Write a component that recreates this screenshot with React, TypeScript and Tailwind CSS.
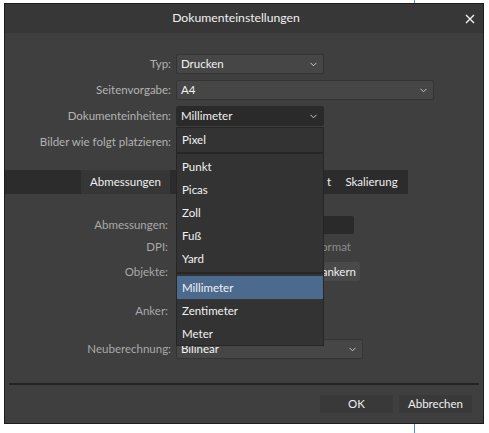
import React from "react";

const Chevron = () => (
  <svg width="7" height="5" viewBox="0 0 7 5" className="shrink-0">
    <path d="M0.5 0.8 L3.5 3.8 L6.5 0.8" fill="none" stroke="#c8c8c8" strokeWidth="1" />
  </svg>
);

function Select({ value, w, dark }: { value: string; w: string; dark?: boolean }) {
  return (
    <div
      className={`${w} h-[20px] flex items-center justify-between pl-[4px] pr-[6px] rounded-[2px] border ${
        dark ? "bg-[#2a2a2a] border-[#2a2a2a]" : "bg-[#464646] border-[#343434]"
      } text-[#f2f2f2]`}
    >
      <span className="leading-none">{value}</span>
      <Chevron />
    </div>
  );
}

function Row({ label, children, mt }: { label: string; children?: React.ReactNode; mt?: string }) {
  return (
    <div className={`flex items-center h-[20px] ${mt ?? ""}`}>
      <div className="w-[166px] text-right text-[#b3b3b3] leading-none">{label}</div>
      <div className="ml-[5px] flex items-center">{children}</div>
    </div>
  );
}

function Item({ t, active }: { t: string; active?: boolean }) {
  return (
    <div
      className={`h-[23px] flex items-center pl-[5px] text-[#f2f2f2] ${active ? "bg-[#4b6a8d]" : ""}`}
    >
      {t}
    </div>
  );
}

export default function App() {
  return (
    <div className="relative w-[489px] h-[433px] bg-white overflow-hidden font-['Lato',sans-serif] text-[11.5px]">
      <div className="absolute left-[414px] top-0 w-px h-full bg-[#4a90d9]" />
      <div className="relative ml-[4px] mt-[3px] w-[480px] h-[421px] border border-[#1d1d1d] bg-[#3f3f3f] flex flex-col">
        {/* Title bar */}
        <div className="h-[29px] bg-[#373737] flex items-center justify-center relative shrink-0">
          <span className="text-[12.2px] text-[#f0f0f0] pr-[16px]">Dokumenteinstellungen</span>
          <svg className="absolute right-[8px] top-[10px]" width="10" height="10" viewBox="0 0 10 10">
            <path d="M1 1 L9 9 M9 1 L1 9" stroke="#f0f0f0" strokeWidth="1.4" />
          </svg>
        </div>

        {/* Top form */}
        <div className="flex flex-col gap-[6px] pt-[21px]">
          <Row label="Typ:">
            <Select value="Drucken" w="w-[148px]" />
          </Row>
          <Row label="Seitenvorgabe:">
            <Select value="A4" w="w-[258px]" />
          </Row>
          <Row label="Dokumenteinheiten:">
            <Select value="Millimeter" w="w-[148px]" dark />
          </Row>
          <Row label="Bilder wie folgt platzieren:">
            <Select value="" w="w-[148px]" />
          </Row>
        </div>

        {/* Tabs */}
        <div className="mt-[18px] h-[24px] w-[403px] bg-[#2c2c2c] flex pl-[76px] text-[#f0f0f0]">
          <div className="w-[89px] bg-[#363636] flex items-center justify-center">Abmessungen</div>
          <div className="w-[50px]" />
          <div className="w-[50px]" />
          <div className="w-[66px] flex items-center justify-end pr-[5px]">t</div>
          <div className="w-[71px] flex items-center justify-center">Skalierung</div>
        </div>

        {/* Tab page */}
        <div className="flex flex-col pt-[22px]">
          <div className="flex items-center h-[18px]">
            <div className="w-[163px] text-right text-[#a9a9a9]">Abmessungen:</div>
            <div className="ml-[8px] w-[178px] h-[18px] bg-[#2a2a2a] rounded-[2px]" />
          </div>
          <div className="flex items-center h-[18px] mt-[4px]">
            <div className="w-[163px] text-right text-[#a9a9a9]">DPI:</div>
            <div className="ml-[8px] w-[175px] flex items-center justify-end">
              <span className="text-[#8c8c8c]">ormat</span>
            </div>
          </div>
          <div className="flex items-center h-[19px] mt-[6px]">
            <div className="w-[163px] text-right text-[#a9a9a9]">Objekte:</div>
            <div className="ml-[8px] w-[184px] flex justify-end">
              <div className="h-[19px] w-[60px] pr-[4px] bg-[#494949] rounded-[2px] flex items-center justify-end text-[#f0f0f0]">
                ankern
              </div>
            </div>
          </div>
          <div className="flex items-center h-[48px] mt-[6px]">
            <div className="w-[163px] text-right text-[#a9a9a9]">Anker:</div>
          </div>
          <div className="flex items-center h-[20px] mt-[4px]">
            <div className="w-[166px] text-right text-[#a9a9a9]">Neuberechnung:</div>
            <div className="ml-[5px]">
              <Select value="Bilinear" w="w-[187px]" />
            </div>
          </div>
        </div>

        {/* Footer */}
        <div className="mt-auto">
          <div className="mx-[4px] h-[2px] bg-[#252525]" />
          <div className="flex justify-end gap-[6px] pr-[11px] pt-[10px] pb-[10px]">
            <div className="w-[73px] h-[18px] bg-[#393939] flex items-center justify-center text-[#f0f0f0]">OK</div>
            <div className="w-[73px] h-[18px] bg-[#393939] flex items-center justify-center text-[#f0f0f0]">Abbrechen</div>
          </div>
        </div>

        {/* Open dropdown list */}
        <div className="absolute left-[171px] top-[123px] w-[148px] bg-[#333333] border border-[#262626] flex flex-col">
          <Item t="Pixel" />
          <div className="mt-[1px] mb-[1px] h-[2px] bg-[#262626]" />
          <Item t="Punkt" />
          <Item t="Picas" />
          <Item t="Zoll" />
          <Item t="Fuß" />
          <Item t="Yard" />
          <div className="mt-[2px] mb-[2px] h-[2px] bg-[#262626]" />
          <Item t="Millimeter" active />
          <Item t="Zentimeter" />
          <Item t="Meter" />
        </div>
      </div>
    </div>
  );
}
